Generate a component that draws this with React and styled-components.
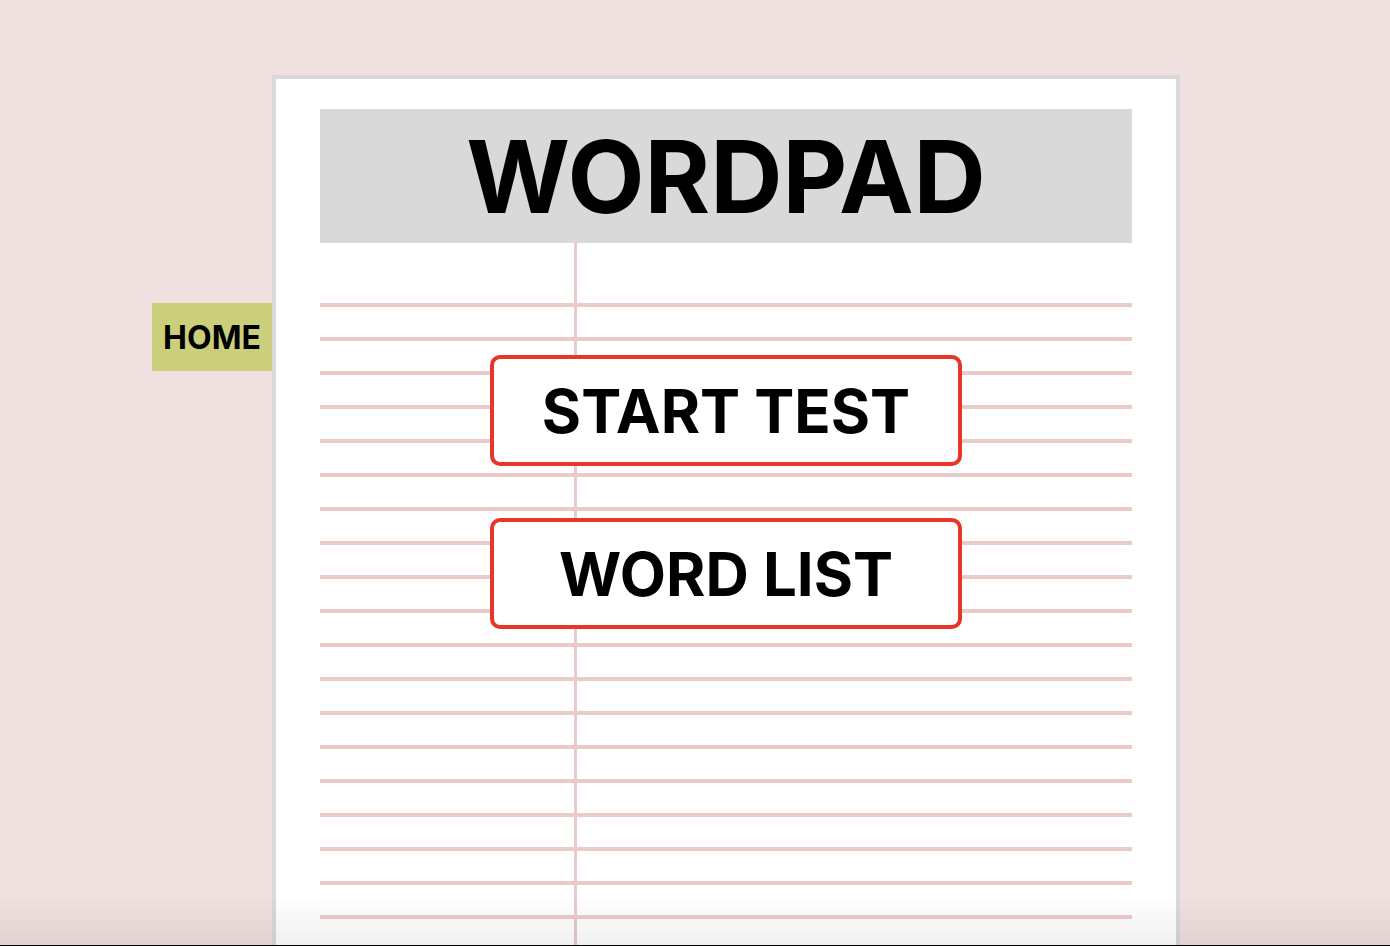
import React from "react";
import styled, { createGlobalStyle } from "styled-components";

const GlobalStyle = createGlobalStyle`
  body {
    margin: 0;
    background: #f0e0e0;
    font-family: Inter, "Liberation Sans", Arial, sans-serif;
    overflow: hidden;
  }
`;

const Page = styled.div`
  display: flex;
  align-items: flex-start;
  padding: 75px 0 0 152px;
  height: 871px;
  overflow: hidden;
`;

const HomeTab = styled.button`
  width: 120px;
  height: 68px;
  margin-top: 228px;
  border: none;
  padding: 0;
  background: #cbcf7b;
  color: #000;
  font-family: inherit;
  font-size: 32px;
  font-weight: 700;
  cursor: pointer;
`;

const Paper = styled.div`
  width: 908px;
  min-height: 1000px;
  display: flex;
  flex-direction: column;
  border: 4px solid #d9d9d9;
  background: #fff;
  padding: 30px 44px 0;
  box-sizing: border-box;
`;

const Header = styled.h1`
  margin: 0;
  height: 134px;
  display: flex;
  align-items: center;
  justify-content: center;
  background: #d9d9d9;
  font-size: 100px;
  font-weight: 700;
`;

const Ruled = styled.div`
  flex: 1;
  display: flex;
  flex-direction: column;
  align-items: center;
  gap: 52px;
  padding-top: 60px;
  background-image:
    linear-gradient(to right, transparent 254px, #ebcaca 254px, #ebcaca 257px, transparent 257px),
    linear-gradient(#ebcaca 4px, transparent 4px);
  background-size: 100% 100%, 100% 34px;
  background-repeat: no-repeat, repeat-y;
  background-origin: border-box, padding-box;
  background-clip: border-box, content-box;
  background-position: 0 0, 0 60px;
`;

const BigButton = styled.button`
  width: 472px;
  height: 111px;
  margin-top: ${(p) => p.$offset || 0}px;
  border: 4.5px solid #e8352a;
  border-radius: 10px;
  background: #fff;
  color: #000;
  font-family: inherit;
  font-size: 60px;
  font-weight: 700;
  cursor: pointer;
  position: relative;
  z-index: 1;
`;

const BottomShade = styled.div`
  position: fixed;
  left: 0;
  right: 0;
  bottom: 0;
  height: 50px;
  pointer-events: none;
  background: linear-gradient(to bottom, rgba(0, 0, 0, 0), rgba(0, 0, 0, 0.06));
  border-bottom: 1px solid #000;
`;

export default function App() {
  return (
    <>
      <GlobalStyle />
      <Page>
        <HomeTab>HOME</HomeTab>
        <Paper>
          <Header>WORDPAD</Header>
          <Ruled>
            <BigButton $offset={52}>START TEST</BigButton>
            <BigButton>WORD LIST</BigButton>
          </Ruled>
        </Paper>
      </Page>
      <BottomShade />
    </>
  );
}
